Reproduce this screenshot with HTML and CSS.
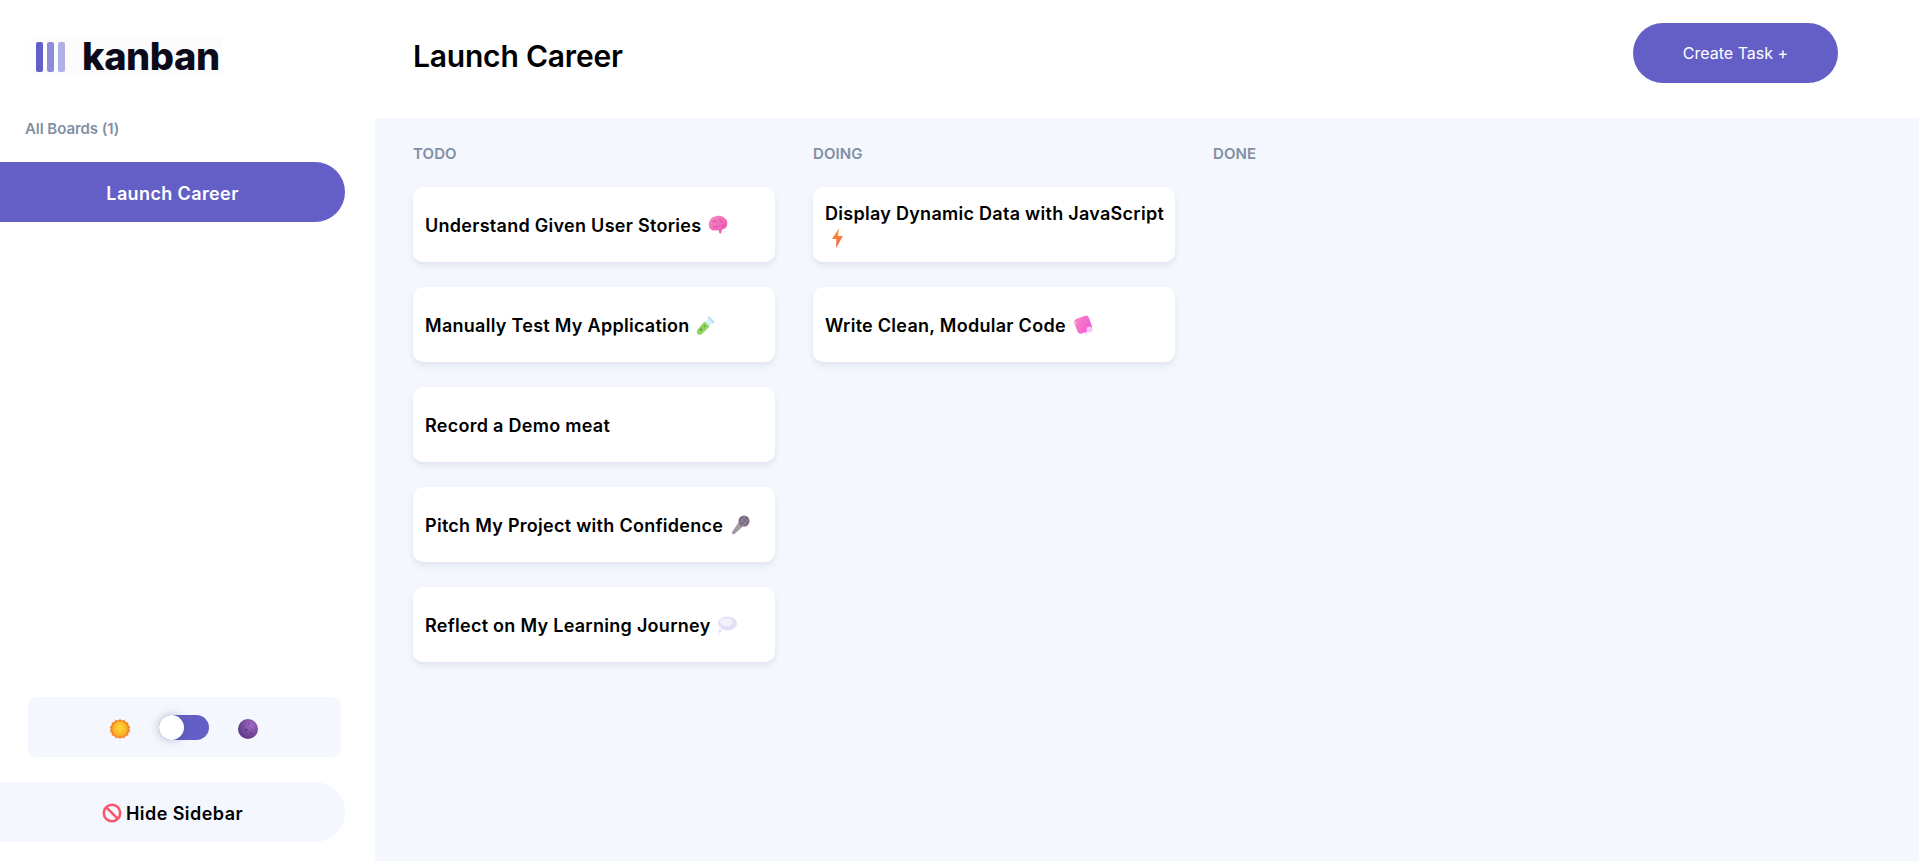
FILE: index.html
```html
<!DOCTYPE html>
<html lang="en">
<head>
<meta charset="utf-8">
<title>Kanban</title>
<link rel="stylesheet" href="styles.css">
</head>
<body>
<div class="app">
  <aside class="sidebar">
    <div class="logo-row">
      <div class="logo">
        <span class="bar bar-1"></span><span class="bar bar-2"></span><span class="bar bar-3"></span>
        <span class="logo-text">kanban</span>
      </div>
    </div>
    <h2 class="boards-label">All Boards (1)</h2>
    <button class="nav-btn nav-active">Launch Career</button>
    <div class="sidebar-spacer"></div>
    <div class="theme-box">
      <svg class="theme-icon" viewBox="0 0 20 20"><defs><radialGradient id="sun" cx=".5" cy=".4" r=".6"><stop offset="0" stop-color="#fdd835"/><stop offset="1" stop-color="#f9a825"/></radialGradient></defs><path fill="#f7892b" d="M10 0l2 1.600 2.500-.8 1.200 2.300 2.500.4.100 2.600 2 1.500-1 2.400 1 2.400-2 1.500-.1 2.600-2.500.4-1.200 2.300-2.500-.8L10 20l-2-1.600-2.500.8-1.200-2.300-2.500-.4-.1-2.600-2-1.500 1-2.400-1-2.400 2-1.500.1-2.600 2.500-.4L5.500.8 8 1.600z"/><circle cx="10" cy="10" r="7.600" fill="url(#sun)"/></svg>
      <div class="toggle"><span class="knob"></span></div>
      <svg class="theme-icon moon" viewBox="0 0 20 20"><defs><radialGradient id="moon" cx=".65" cy=".3" r=".8"><stop offset="0" stop-color="#a06cc4"/><stop offset="1" stop-color="#55307f"/></radialGradient></defs><circle cx="10" cy="10" r="10" fill="url(#moon)"/><circle cx="8" cy="11" r="1.500" fill="#5c3a86"/><circle cx="13" cy="14" r="1" fill="#5c3a86"/><circle cx="11" cy="5" r="1" fill="#7d52a6"/></svg>
    </div>
    <button class="nav-btn nav-hide">
      <svg class="no-icon" viewBox="0 0 20 20"><circle cx="10" cy="10" r="8.200" fill="none" stroke="#f8566f" stroke-width="2.600"/><path d="M4.300 4.300l11.400 11.400" stroke="#f8566f" stroke-width="2.600"/></svg>
      Hide Sidebar
    </button>
  </aside>
  <div class="content">
    <header class="topbar">
      <h1 class="title">Launch Career</h1>
      <button class="create-btn">Create Task +</button>
    </header>
    <main class="board">
      <section class="column">
        <h3 class="col-title">TODO</h3>
        <article class="card"><p class="card-text">Understand Given User Stories
          <svg class="emoji" viewBox="0 0 20 20"><defs><linearGradient id="brain" x1="0" y1="0" x2="1" y2="1"><stop offset="0" stop-color="#f48fc4"/><stop offset="1" stop-color="#ea4fb0"/></linearGradient></defs><path fill="url(#brain)" d="M7 1.500C10 .2 14 .6 16 2.500c2.800 1.800 4 5 3 8-.7 2.300-2.600 3.800-5 4l-.8 3.500c-.5.800-1.500.7-1.900 0l-.8-3C7.500 16 4 16 2 13.500-.2 10.500.2 3.500 7 1.500z"/><path fill="none" stroke="#d93f98" stroke-width=".8" d="M4 7c2-1.500 4-1 5 .5M12 3c-.5 2 .5 3.500 3 4M5 12c2 .5 4-.2 5.500-1.500M14 10.500c1 .3 2 .2 3-.3"/></svg></p></article>
        <article class="card"><p class="card-text">Manually Test My Application
          <svg class="emoji" viewBox="0 0 20 20"><path fill="#bfe3f5" d="M11.500 2.500l1.500-1.500 6 6-1.500 1.500-1-.2-4.800-4.800z"/><path fill="#d8eefa" d="M12 4l4 4-3 3-4-4z"/><path fill="#8fd45c" d="M8.500 6.500l5 5-7.200 7.300c-1.400 1.300-3.400 1.300-4.600.1s-1.200-3.300.1-4.700z"/><circle cx="5" cy="14.500" r="1" fill="#4f8a2e"/><circle cx="8.500" cy="11" r=".8" fill="#4f8a2e"/></svg></p></article>
        <article class="card"><p class="card-text">Record a Demo meat</p></article>
        <article class="card"><p class="card-text">Pitch My Project with Confidence
          <svg class="emoji" viewBox="0 0 20 20"><path fill="#a49aa3" d="M9.500 6l4.500 4.500-9.500 8.500c-.7.500-1.500.4-2.100-.2s-.7-1.400-.2-2.100z"/><circle cx="14" cy="6" r="5.500" fill="#76687f"/><path stroke="#a093a8" stroke-width=".8" d="M10.500 3.500l7 7M13 1.500l5 5M9.500 6.500l5 5M15.500 1l-5.500 7M18.500 4l-6 7"/></svg></p></article>
        <article class="card"><p class="card-text">Reflect on My Learning Journey
          <svg class="emoji" viewBox="0 0 20 20"><ellipse cx="10.500" cy="8.500" rx="9.500" ry="7" fill="#e4def5"/><ellipse cx="9.500" cy="7" rx="6.500" ry="4" fill="#f3f0fb"/><circle cx="3" cy="16" r="1.600" fill="#e4def5"/><circle cx="1.500" cy="18.700" r="1" fill="#e4def5"/></svg></p></article>
      </section>
      <section class="column">
        <h3 class="col-title">DOING</h3>
        <article class="card"><p class="card-text"><span class="one-line">Display Dynamic Data with JavaScript</span>
          <svg class="emoji emoji-below" viewBox="0 0 20 20"><defs><linearGradient id="bolt" x1="0" y1="0" x2="0" y2="1"><stop offset="0" stop-color="#fb9d3f"/><stop offset="1" stop-color="#f2593f"/></linearGradient></defs><path fill="url(#bolt)" d="M14 0L7 11h4.500L11 20l7-12h-5z"/></svg></p></article>
        <article class="card"><p class="card-text">Write Clean, Modular Code
          <svg class="emoji" viewBox="0 0 20 20"><defs><linearGradient id="gem" x1="0" y1="0" x2="1" y2="1"><stop offset="0" stop-color="#f88ac0"/><stop offset="1" stop-color="#f052d8"/></linearGradient></defs><rect x="2.500" y="2" width="15.500" height="15.500" rx="3.500" transform="rotate(-20 10 10)" fill="url(#gem)"/><circle cx="2" cy="8" r="1.500" fill="#f6b8ee"/><circle cx="16.500" cy="14.500" r="3" fill="#f4c6f6"/><circle cx="13" cy="18" r="1.200" fill="#f4c6f6"/></svg></p></article>
      </section>
      <section class="column">
        <h3 class="col-title">DONE</h3>
      </section>
    </main>
  </div>
</div>
</body>
</html>
```

FILE: styles.css
```css
* { box-sizing: border-box; }
html, body { margin: 0; height: 100%; }
body {
  font-family: "Inter", "Liberation Sans", sans-serif;
  color: #000;
  background: #fff;
  overflow: hidden;
}
.app { display: flex; height: 861px; }

.sidebar {
  width: 375px;
  flex: none;
  display: flex;
  flex-direction: column;
  padding-bottom: 19px;
  background: #fff;
}
.logo-row { height: 118px; padding: 36px 0 0 31px; }
.logo {
  display: inline-flex;
  align-items: center;
  width: 191px;
  height: 41px;
  padding-left: 5px;
  background: #fcfcfc;
}
.bar { width: 7px; height: 30px; border-radius: 2px; margin-right: 4px; }
.bar-1 { background: #635fc7; }
.bar-2 { background: #8e8bd8; }
.bar-3 { background: #b1afe6; margin-right: 0; }
.logo-text {
  margin-left: 17px;
  font-size: 38px;
  font-weight: 800;
  line-height: 41px;
  letter-spacing: -.4px;
  color: #0b0b1c;
}
.boards-label {
  margin: 1px 0 18px 25px;
  height: 25px;
  font-size: 15px;
  font-weight: 600;
  line-height: 20px;
  letter-spacing: -.05px;
  color: #828fa3;
}
.nav-btn {
  display: flex;
  align-items: center;
  justify-content: center;
  width: 345px;
  height: 60px;
  border: 0;
  padding: 2px 0 0;
  border-radius: 0 30px 30px 0;
  font: inherit;
  font-size: 18px;
  font-weight: 630;
}
.nav-active { background: #635fc7; color: #fff; letter-spacing: .38px; }
.nav-hide { background: #f4f7fd; color: #000; gap: 4px; letter-spacing: .45px; }
.no-icon { width: 20px; height: 20px; }
.sidebar-spacer { flex: 1; }
.theme-box {
  display: flex;
  align-items: center;
  width: 313px;
  height: 60px;
  margin: 0 0 25px 28px;
  padding-left: 82px;
  border-radius: 8px;
  background: #f4f7fd;
}
.theme-icon { width: 20px; height: 20px; margin-top: 3px; }
.toggle {
  position: relative;
  width: 50px;
  height: 25px;
  margin: 0 29px;
  border-radius: 13px;
  background: #635fc7;
}
.knob {
  position: absolute;
  left: 0;
  top: 0;
  width: 25px;
  height: 25px;
  border-radius: 50%;
  background: #fff;
  box-shadow: 0 0 10px rgba(54, 78, 126, .35);
}

.content { flex: 1; display: flex; flex-direction: column; min-width: 0; }
.topbar {
  height: 118px;
  flex: none;
  display: flex;
  align-items: center;
  justify-content: space-between;
  padding: 0 81px 12px 38px;
}
.title { margin: 6px 0 0; font-size: 30px; font-weight: 600; letter-spacing: -.2px; }
.create-btn {
  width: 205px;
  height: 60px;
  border: 0;
  border-radius: 30px;
  background: #635fc7;
  color: #fff;
  font: inherit;
  font-size: 16px;
  font-weight: 400;
}
.board {
  flex: 1;
  display: flex;
  gap: 38px;
  padding: 26px 0 0 38px;
  background: #f4f7fd;
}
.column { width: 362px; flex: none; display: flex; flex-direction: column; gap: 25px; }
.col-title {
  margin: 0 0 -2px;
  height: 20px;
  font-size: 15px;
  font-weight: 600;
  line-height: 20px;
  letter-spacing: .1px;
  color: #828fa3;
}
.card {
  display: flex;
  align-items: center;
  height: 75px;
  padding: 2px 12px 0;
  border-radius: 10px;
  background: #fff;
  box-shadow: 0 4px 6px rgba(54, 78, 126, .1);
}
.card-text {
  margin: 0;
  font-size: 18px;
  font-weight: 630;
  line-height: 24px;
  letter-spacing: .28px;
}
.one-line { display: block; white-space: nowrap; }
.emoji { width: 20px; height: 20px; vertical-align: -3px; margin-left: 2px; }
.emoji-below { display: block; margin-left: 0; height: 24px; padding: 2px 0; }
```
